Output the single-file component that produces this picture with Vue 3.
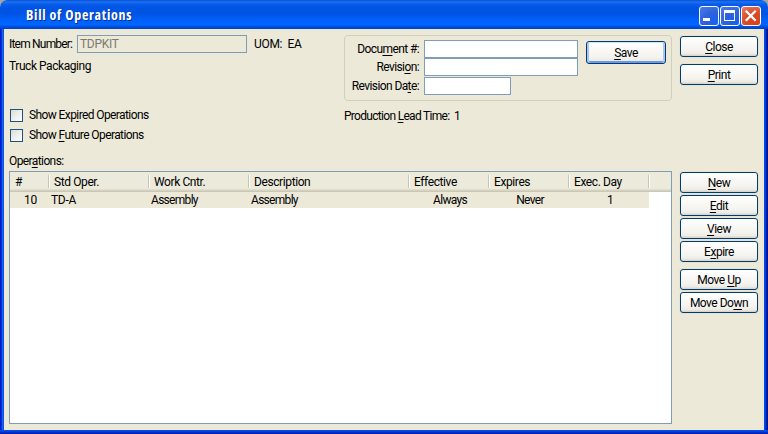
<script setup>
import { h, ref } from 'vue'

// Renders a caption whose mnemonic letter is preceded by "&".
const Caption = (props) => {
  const [before, after] = props.text.split('&')
  return after ? [before, h('u', after[0]), after.slice(1)] : [before]
}
Caption.props = ['text']

const itemNumber = ref('TDPKIT')
const showExpired = ref(false)
const showFuture = ref(false)

const columns = [
  { title: '#', width: 40, align: 'right' },
  { title: 'Std Oper.', width: 100 },
  { title: 'Work Cntr.', width: 100 },
  { title: 'Description', width: 160 },
  { title: 'Effective', width: 80, align: 'center' },
  { title: 'Expires', width: 80, align: 'center' },
  { title: 'Exec. Day', width: 80, align: 'center' },
]
const rows = [['10', 'TD-A', 'Assembly', 'Assembly', 'Always', 'Never', '1']]
const actions = ['&New', '&Edit', '&View', 'E&xpire']
const moves = ['Move &Up', 'Move Do&wn']
</script>

<template>
  <div class="desk">
    <div class="window">
      <header class="titlebar">
        <h1>Bill of Operations</h1>
        <div class="controls">
          <button class="ctl" aria-label="Minimize">
            <svg width="20" height="20"><rect x="4" y="12" width="7" height="3" fill="#fff" /></svg>
          </button>
          <button class="ctl" aria-label="Maximize">
            <svg width="20" height="20"><path d="M4 4h11v11H4zM5 7v7h9V7z" fill="#fff" fill-rule="evenodd" /></svg>
          </button>
          <button class="ctl shut" aria-label="Close">
            <svg width="20" height="20"><path d="M4.800 4.800l9.900 9.900M14.700 4.800l-9.900 9.900" stroke="#fff" stroke-width="2.300" /></svg>
          </button>
        </div>
      </header>

      <main class="body">
        <section class="top">
          <div class="item">
            <div class="line">
              <label class="item-label">Item Number:</label>
              <input class="field item-field" :value="itemNumber" disabled />
              <span class="uom">UOM:&nbsp; EA</span>
            </div>
            <p class="desc">Truck Packaging</p>
            <label class="check first"><input v-model="showExpired" type="checkbox" /><span class="cap"><Caption text="Show Exp&ired Operations" /></span></label>
            <label class="check"><input v-model="showFuture" type="checkbox" /><span class="cap"><Caption text="Show &Future Operations" /></span></label>
          </div>
          <div class="doc">
            <div class="group">
              <div class="fields">
                <label><Caption text="Docu&ment #:" /></label><input class="field" />
                <label><Caption text="Revisi&on:" /></label><input class="field" />
                <label><Caption text="Revision Da&te:" /></label><input class="field date" />
              </div>
              <button class="btn save"><span><Caption text="&Save" /></span></button>
            </div>
            <p class="lead"><Caption text="Production &Lead Time:" />&nbsp; 1</p>
          </div>
          <div class="side">
            <button class="btn"><span><Caption text="&Close" /></span></button>
            <button class="btn print"><span><Caption text="&Print" /></span></button>
          </div>
        </section>

        <p class="list-label"><Caption text="Oper&ations:" /></p>

        <section class="bottom">
          <div class="list">
            <div class="head">
              <div v-for="c in columns" :key="c.title" class="th" :style="{ width: c.width + 'px' }">{{ c.title }}</div>
            </div>
            <div v-for="(r, i) in rows" :key="i" class="row">
              <div v-for="(v, j) in r" :key="j" class="td" :class="columns[j].align" :style="{ width: columns[j].width + 'px' }">{{ v }}</div>
            </div>
          </div>
          <div class="side">
            <button v-for="a in actions" :key="a" class="btn"><span><Caption :text="a" /></span></button>
            <div class="gap"></div>
            <button v-for="a in moves" :key="a" class="btn"><span><Caption :text="a" /></span></button>
          </div>
        </section>
      </main>
    </div>
  </div>
</template>

<style>
body { margin: 0; overflow: hidden; }
</style>

<style scoped>
* { box-sizing: border-box; }
p, h1 { margin: 0; }
.desk {
  width: 768px;
  height: 434px;
  background: #a9a590;
  font: 400 12px/16px Roboto, "Liberation Sans", sans-serif;
  letter-spacing: -0.6px;
  white-space: nowrap;
  color: #000;
}
.window {
  height: 434px;
  border-radius: 7px 7px 0 0;
  background: #ece9d8;
  overflow: hidden;
  display: flex;
  flex-direction: column;
}
.titlebar {
  height: 29px;
  flex: none;
  display: flex;
  justify-content: space-between;
  align-items: flex-start;
  padding: 6px 7px 0 26px;
  background: linear-gradient(#0a4fd0 0, #1a74f5 2px, #0a5cea 4px, #0055e5 7px, #0054e3 14px, #0060fb 20px, #0066ff 25px, #0055e5 26px, #003fc8 29px);
}
h1 {
  font: bold 14px/17px "Open Sans", sans-serif;
  font-stretch: 75%;
  letter-spacing: 0.7px;
  color: #fff;
  text-shadow: 1px 1px 0 #0a2f91;
}
.controls { display: flex; gap: 1px; }
.ctl {
  width: 20px;
  height: 20px;
  padding: 0;
  border: 1px solid #fff;
  border-radius: 3px;
  background: radial-gradient(circle at 80% 90%, #1763ef 0, #2d62db 50%, #4d7ee8 100%);
}
.ctl svg { display: block; margin: -1px; }
.ctl.shut { background: radial-gradient(circle at 75% 90%, #d9421a 0, #d94a29 50%, #e88068 100%); }
.body {
  flex: 1;
  padding: 6px 10px 6px 9px;
  background:
    linear-gradient(#0855ef, #0039d8 50%, #0011a0) bottom / 100% 4px no-repeat,
    linear-gradient(90deg, #0019cf 0 1px, #0733dc 1px 2px, #1664ef 2px 3px, #0855dd 3px) left / 4px 100% no-repeat,
    linear-gradient(90deg, #0048f0 0 1px, #003ddc 1px 2px, #001ea6 2px 3px, #00138c 3px) right / 4px 100% no-repeat,
    #ece9d8;
}
.top { display: grid; grid-template-columns: 335px 328px 78px; height: 118px; }
.top .side { margin-left: 8px; }
.line { display: flex; align-items: center; height: 18px; }
.item-label { width: 68px; letter-spacing: -0.8px; }
.field {
  display: block;
  width: 154px;
  height: 18px;
  margin: 0;
  padding: 0 2px;
  border: 1px solid #7f9db9;
  border-radius: 0;
  background: #fff;
  font: inherit;
  letter-spacing: 0;
}
.item-field { width: 170px; background: #ece9d8; color: #7b7a70; letter-spacing: -0.3px; }
.uom { margin-left: 7px; letter-spacing: -0.3px; }
.desc { margin-top: 5px; letter-spacing: -0.45px; }
.check { display: flex; align-items: center; height: 20px; }
.check.first { margin-top: 31px; }
.check input {
  appearance: none;
  width: 13px;
  height: 13px;
  margin: 0 6px 0 1px;
  border: 1px solid #1c5180;
  background: linear-gradient(135deg, #dcdcd7, #fff);
}
.group {
  display: flex;
  height: 66px;
  padding: 4px 5px 0 4px;
  border: 1px solid #d0d0bf;
  border-radius: 4px;
}
.fields {
  display: grid;
  grid-template-columns: 70px 154px;
  grid-template-rows: 18px 19px 18px;
  column-gap: 5px;
  line-height: 18px;
  text-align: right;
  flex: none;
}
.date { width: 87px; }
.lead { margin-top: 7px; letter-spacing: -0.7px; }
.btn {
  display: flex;
  align-items: center;
  justify-content: center;
  width: 78px;
  height: 21px;
  padding: 0;
  border: 1px solid #003c74;
  border-radius: 3px;
  background: linear-gradient(#fff, #f4f3ee 70%, #ecebe6 88%, #d6d0c5);
  box-shadow: 0 0 0 1px #e6e3d3;
  color: #000;
  font: inherit;
  letter-spacing: -0.5px;
}
.desk :deep(u) {
  text-underline-offset: 2px;
  text-decoration-thickness: 1px;
  text-decoration-skip-ink: none;
}
.side { display: flex; flex-direction: column; gap: 2px; padding-top: 1px; }
.save {
  width: 80px;
  height: 23px;
  margin: 1px 0 0 8px;
  box-shadow: inset 0 1px #cee7ff, inset 2px 0 #a9c5f2, inset -2px 0 #a9c5f2, inset 0 -2px #6f97e4;
}
.print { margin-top: 5px; }
.list-label { height: 18px; }
.bottom { display: flex; gap: 8px; }
.list { width: 663px; height: 253px; border: 1px solid #7f9db9; background: #fff; }
.head {
  display: flex;
  height: 20px;
  background: linear-gradient(#ebeadb 17px, #e2decd 17px 18px, #d6d2c2 18px 19px, #cbc7b8 19px);
}
.th { flex: none; padding: 2px 0 0 4px; position: relative; letter-spacing: -0.4px; }
.th:first-child { padding-left: 5px; }
.th::after {
  content: "";
  position: absolute;
  right: 0;
  top: 3px;
  width: 2px;
  height: 13px;
  background: linear-gradient(90deg, #c7c5b2 50%, #fff 50%);
}
.row { display: flex; width: 639px; height: 16px; background: #ece9d8; letter-spacing: -0.7px; }
.td { flex: none; padding: 0 1px; }
.td:nth-child(2) { letter-spacing: -0.3px; }
.td:first-child { padding-right: 13px; letter-spacing: -0.3px; }
.right { text-align: right; }
.center { text-align: center; }
.gap { height: 3px; }
</style>
